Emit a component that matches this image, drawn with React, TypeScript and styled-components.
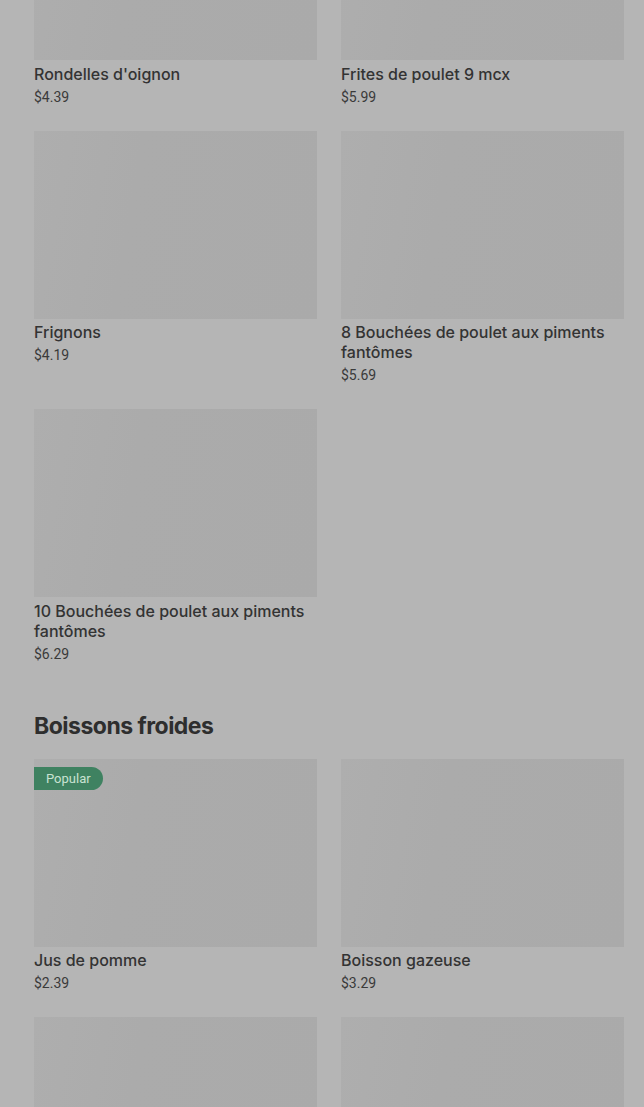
import styled, { createGlobalStyle } from "styled-components";

const GlobalStyle = createGlobalStyle`
    html, body {
        margin: 0;
        padding: 0;
        background: #b5b5b5;
        overflow: hidden;
    }
    body {
        font-family: Inter, "Liberation Sans", sans-serif;
    }
`;

type Item = {
    name: string;
    price: string;
    popular?: boolean;
};

const snacks: Item[] = [
    { name: "Rondelles d'oignon", price: "$4.39" },
    { name: "Frites de poulet 9 mcx", price: "$5.99" },
    { name: "Frignons", price: "$4.19" },
    { name: "8 Bouchées de poulet aux piments fantômes", price: "$5.69" },
    { name: "10 Bouchées de poulet aux piments fantômes", price: "$6.29" },
];

const drinks: Item[] = [
    { name: "Jus de pomme", price: "$2.39", popular: true },
    { name: "Boisson gazeuse", price: "$3.29" },
    { name: "", price: "" },
    { name: "", price: "" },
];

const MenuCard = ({ item }: { item: Item }) => (
    <Card>
        <Picture>
            {item.popular && <Badge>Popular</Badge>}
        </Picture>
        {item.name && (
            <Info>
                <Name>{item.name}</Name>
                <Price>{item.price}</Price>
            </Info>
        )}
    </Card>
);

const App = () => {
    return (
        <>
            <GlobalStyle />
            <Page>
                <Grid $offset={-128}>
                    {snacks.map((s, i) => (
                        <MenuCard key={i} item={s} />
                    ))}
                </Grid>

                <Section>
                    <Heading>Boissons froides</Heading>
                    <Grid>
                        {drinks.map((d, i) => (
                            <MenuCard key={i} item={d} />
                        ))}
                    </Grid>
                </Section>
            </Page>
        </>
    );
};

export default App;


const Page = styled.main`
    padding: 0 20px 0 34px;
    height: 1107px;
    overflow: hidden;
`;

const Grid = styled.div<{ $offset?: number }>`
    display: grid;
    grid-template-columns: 283px 283px;
    column-gap: 24px;
    row-gap: 24px;
    margin-top: ${(p) => p.$offset ?? 0}px;
`;

const Card = styled.div`
    display: flex;
    flex-direction: column;
`;

const Picture = styled.div`
    position: relative;
    height: 188px;
    background: linear-gradient(100deg, #aeaeae 0%, #ababab 35%, #aaaaaa 100%);
`;

const Badge = styled.span`
    position: absolute;
    top: 8px;
    left: 0;
    height: 23px;
    padding: 0 12px;
    display: flex;
    align-items: center;
    background: #3f8261;
    color: #c9e2d2;
    font-family: Roboto, "Liberation Sans", sans-serif;
    font-size: 13px;
    border-radius: 0 12px 12px 0;
`;

const Info = styled.div`
    padding-top: 3.5px;
`;

const Name = styled.div`
    font-size: 16px;
    line-height: 20px;
    font-weight: 500;
    color: #333333;
`;

const Price = styled.div`
    margin-top: 3px;
    font-family: Roboto, "Liberation Sans", sans-serif;
    font-size: 14px;
    line-height: 20px;
    color: #3a3a3a;
`;

const Section = styled.section`
    margin-top: 46px;
`;

const Heading = styled.h2`
    margin: 0 0 17px;
    font-size: 23px;
    line-height: 32px;
    font-weight: 700;
    letter-spacing: -0.5px;
    color: #2e2e2e;
`;
